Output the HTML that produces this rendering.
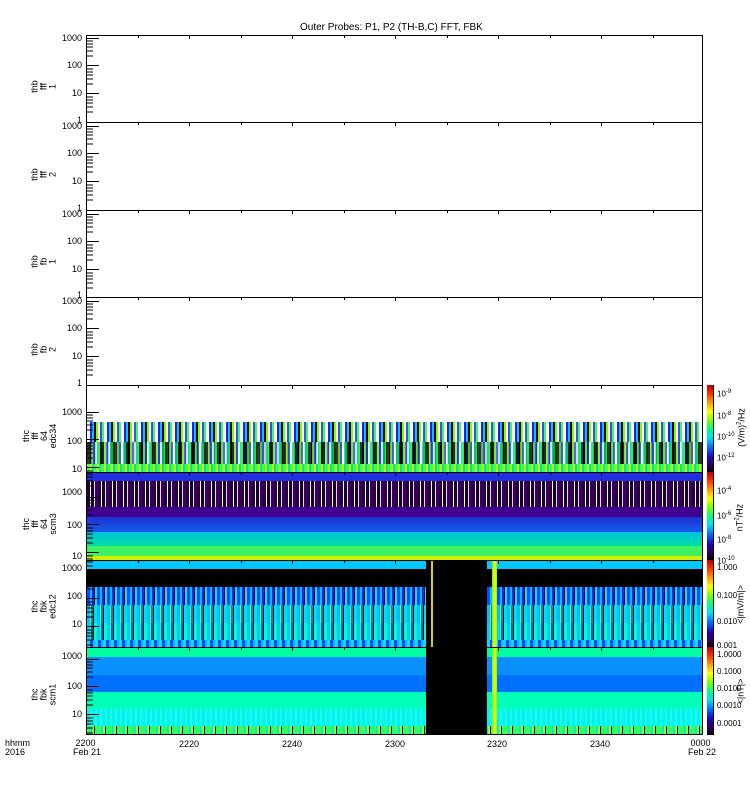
<!DOCTYPE html><html><head><style>
body{margin:0;width:750px;height:800px;background:#fff;position:relative;overflow:hidden;font-family:"Liberation Sans",sans-serif;color:#000}
.a{position:absolute}
.p{position:absolute;left:86px;width:617px;border:1px solid #000;box-sizing:border-box;overflow:hidden}
.t{position:absolute;font-size:10px;line-height:10px}
.yl{position:absolute;font-size:9px;line-height:9px;text-align:right;width:40px;left:42px}
.vl{position:absolute;font-size:9px;line-height:9px;transform:rotate(-90deg);transform-origin:center;text-align:center;width:60px}
.cb{position:absolute;left:707px;width:6px;background:linear-gradient(#c00000,#ff3000 10%,#ffb000 22%,#ffff00 30%,#80ff00 40%,#00ff80 50%,#00e0ff 60%,#0060ff 72%,#2000c0 82%,#300050 92%,#000 100%)}
.cl{position:absolute;left:717px;font-size:8px;line-height:8px}
.b{position:absolute;left:0;width:100%}
</style></head><body>
<div class="t" style="left:300px;top:23px;font-size:10px">Outer Probes: P1, P2 (TH-B,C) FFT, FBK</div>

<div class="p" style="top:35px;height:88px"></div>
<div class="p" style="top:122px;height:89px"></div>
<div class="p" style="top:210px;height:88px"></div>
<div class="p" style="top:297px;height:89px"></div>

<div class="p" style="top:385px;height:88px">
 <div class="b" style="top:36px;height:48px;background:repeating-linear-gradient(90deg,#fff 0 3px,#2020e0 3px 5px,#00c0ff 5px 7px,#000 7px 9px,#80ff00 9px 11px,#fff 11px 13px,#3050ff 13px 15px,#40ff40 15px 17px)"></div>
 <div class="b" style="top:56px;height:24px;background:repeating-linear-gradient(90deg,#000 0 4px,#80e000 4px 6px,#2040ff 6px 8px,#fff 8px 10px,#00e060 10px 13px);opacity:.8"></div>
 <div class="b" style="top:78px;height:9px;background:repeating-linear-gradient(90deg,#40ff40 0 3px,#c0ff00 3px 5px,#00e0b0 5px 7px)"></div>
</div>
<div class="p" style="top:472px;height:89px">
 <div class="b" style="top:0;height:8px;background:#2030e0"></div>
 <div class="b" style="top:8px;height:26px;background:repeating-linear-gradient(90deg,#2a0040 0 3px,#fff 3px 4px,#180028 4px 7px,#ddd 7px 8px,#3a0060 8px 11px)"></div>
 <div class="b" style="top:34px;height:10px;background:#400090"></div>
 <div class="b" style="top:44px;height:15px;background:linear-gradient(#2030d0,#1060f0)"></div>
 <div class="b" style="top:59px;height:14px;background:linear-gradient(#00c0e0,#00e0a0)"></div>
 <div class="b" style="top:73px;height:10px;background:#40f060"></div>
 <div class="b" style="top:83px;height:5px;background:#d0f000"></div>
</div>
<div class="p" style="top:560px;height:88px">
 <div class="b" style="top:0;height:8px;background:#00c8ff"></div>
 <div class="b" style="top:8px;height:18px;background:#000"></div>
 <div class="b" style="top:26px;height:18px;background:repeating-linear-gradient(90deg,#0050ff 0 3px,#00c0ff 3px 5px,#2020e0 5px 7px,#000 7px 8px,#00e0ff 8px 10px)"></div>
 <div class="b" style="top:44px;height:18px;background:repeating-linear-gradient(90deg,#00c0ff 0 3px,#80ff00 3px 4px,#0080ff 4px 6px,#000 6px 7px,#00e0e0 7px 10px)"></div>
 <div class="b" style="top:62px;height:17px;background:repeating-linear-gradient(90deg,#00d0ff 0 3px,#40ff40 3px 4px,#0060ff 4px 6px,#000 6px 7px,#00ffc0 7px 10px)"></div>
 <div class="b" style="top:79px;height:8px;background:repeating-linear-gradient(90deg,#00e0ff 0 3px,#2040ff 3px 6px,#00c0ff 6px 8px)"></div>
 <div class="a" style="left:339px;top:0;width:61px;height:88px;background:#000"></div>
 <div class="a" style="left:344px;top:0;width:2px;height:88px;background:#e0d000"></div>
 <div class="a" style="left:405px;top:0;width:5px;height:88px;background:linear-gradient(90deg,#40ff40,#ffff00,#80ff00)"></div>
</div>
<div class="p" style="top:647px;height:88px">
 <div class="b" style="top:0;height:9px;background:#00ffa0"></div>
 <div class="b" style="top:9px;height:18px;background:#0a90ff"></div>
 <div class="b" style="top:27px;height:17px;background:#0070ff"></div>
 <div class="b" style="top:44px;height:17px;background:#00ffb8"></div>
 <div class="b" style="top:61px;height:17px;background:repeating-linear-gradient(90deg,#00f0ff 0 3px,#20ffd0 3px 5px)"></div>
 <div class="b" style="top:78px;height:10px;background:repeating-linear-gradient(90deg,#40ff40 0 3px,#00e0ff 3px 5px,#a0ff00 5px 7px,#000 7px 8px,#20ff80 8px 11px)"></div>
 <div class="a" style="left:339px;top:0;width:61px;height:88px;background:#000"></div>
 <div class="a" style="left:405px;top:0;width:5px;height:88px;background:linear-gradient(90deg,#40ff40,#ffff00,#80ff00)"></div>
</div>

<svg class="a" style="left:0;top:0" width="750" height="800">
<g stroke="#000" stroke-width="1">
<!-- x ticks top/bottom per panel -->
<g id="xt">
<path d="M138.5 35v3M189.5 35v4M241.5 35v3M292.5 35v4M344.5 35v3M395.5 35v4M447.5 35v3M498.5 35v4M550.5 35v3M601.5 35v4M653.5 35v3"/>
</g>
<use href="#xt" y="87"/><use href="#xt" y="175"/><use href="#xt" y="262"/><use href="#xt" y="350"/><use href="#xt" y="437"/><use href="#xt" y="525"/><use href="#xt" y="612"/>
<g id="yt">
<path d="M87 38.5h12M87 65.5h12M87 93.5h12M87 41h6M87 44h6M87 47h6M87 51h6M87 56h6M87 69h6M87 72h6M87 75h6M87 79h6M87 84h6M87 97h6M87 100h6M87 103h6M87 107h6M87 112h6"/>
</g>
<use href="#yt" y="88"/><use href="#yt" y="176"/><use href="#yt" y="263"/>
<use href="#yt" y="374"/><use href="#yt" y="459"/><use href="#yt" y="533"/><use href="#yt" y="621"/>
</g>
</svg>

<div class="yl" style="top:34px">1000</div><div class="yl" style="top:61px">100</div><div class="yl" style="top:89px">10</div>
<div class="yl" style="top:116px">1</div><div class="yl" style="top:122px">1000</div><div class="yl" style="top:149px">100</div><div class="yl" style="top:177px">10</div>
<div class="yl" style="top:204px">1</div><div class="yl" style="top:210px">1000</div><div class="yl" style="top:237px">100</div><div class="yl" style="top:265px">10</div>
<div class="yl" style="top:291px">1</div><div class="yl" style="top:297px">1000</div><div class="yl" style="top:324px">100</div><div class="yl" style="top:352px">10</div>
<div class="yl" style="top:379px">1</div><div class="yl" style="top:408px">1000</div><div class="yl" style="top:437px">100</div><div class="yl" style="top:465px">10</div>
<div class="yl" style="top:488px">1000</div><div class="yl" style="top:521px">100</div><div class="yl" style="top:552px">10</div>
<div class="yl" style="top:564px">1000</div><div class="yl" style="top:592px">100</div><div class="yl" style="top:620px">10</div>
<div class="yl" style="top:652px">1000</div><div class="yl" style="top:682px">100</div><div class="yl" style="top:710px">10</div>

<div class="vl" style="left:14px;top:73px">thb<br>fff<br>1</div>
<div class="vl" style="left:14px;top:161px">thb<br>fff<br>2</div>
<div class="vl" style="left:14px;top:248px">thb<br>fb<br>1</div>
<div class="vl" style="left:14px;top:336px">thb<br>fb<br>2</div>
<div class="vl" style="left:10px;top:418px">thc<br>fff<br>64<br>edc34</div>
<div class="vl" style="left:10px;top:506px">thc<br>fff<br>64<br>scm3</div>
<div class="vl" style="left:14px;top:593px">thc<br>fbk<br>edc12</div>
<div class="vl" style="left:14px;top:681px">thc<br>fbk<br>scm1</div>

<div class="cb" style="top:385px;height:88px"></div>
<div class="cb" style="top:472px;height:88px"></div>
<div class="cb" style="top:560px;height:88px"></div>
<div class="cb" style="top:647px;height:88px"></div>
<div class="a" style="left:713px;top:385px;width:1px;height:350px;background:#000"></div>
<div class="cl" style="top:388px">10<sup style="font-size:6px">-9</sup></div>
<div class="cl" style="top:410px">10<sup style="font-size:6px">-8</sup></div>
<div class="cl" style="top:431px">10<sup style="font-size:6px">-10</sup></div>
<div class="cl" style="top:452px">10<sup style="font-size:6px">-12</sup></div>
<div class="vl" style="left:706px;top:422px;width:70px">(V/m)<sup style="font-size:6px">2</sup>/Hz</div>
<div class="cl" style="top:485px">10<sup style="font-size:6px">-4</sup></div>
<div class="cl" style="top:510px">10<sup style="font-size:6px">-6</sup></div>
<div class="cl" style="top:534px">10<sup style="font-size:6px">-8</sup></div>
<div class="cl" style="top:555px">10<sup style="font-size:6px">-10</sup></div>
<div class="vl" style="left:709px;top:512px;width:60px">nT<sup style="font-size:6px">2</sup>/Hz</div>
<div class="cl" style="top:564px">1.000</div>
<div class="cl" style="top:592px">0.100</div>
<div class="cl" style="top:618px">0.010</div>
<div class="cl" style="top:642px">0.001</div>
<div class="vl" style="left:706px;top:600px;width:70px">&lt;|mV/m|&gt;</div>
<div class="cl" style="top:651px">1.0000</div>
<div class="cl" style="top:668px">0.1000</div>
<div class="cl" style="top:685px">0.0100</div>
<div class="cl" style="top:702px">0.0010</div>
<div class="cl" style="top:720px">0.0001</div>
<div class="vl" style="left:711px;top:687px;width:60px">&lt;|nT|&gt;</div>

<div class="t" style="left:5px;top:739px;font-size:9px;line-height:9px">hhmm<br>2016</div>
<div class="t" style="left:73px;top:739px;font-size:9px;line-height:9px">&nbsp;2200<br>Feb 21</div>
<div class="t" style="left:179px;top:739px;font-size:9px">2220</div>
<div class="t" style="left:282px;top:739px;font-size:9px">2240</div>
<div class="t" style="left:385px;top:739px;font-size:9px">2300</div>
<div class="t" style="left:487px;top:739px;font-size:9px">2320</div>
<div class="t" style="left:590px;top:739px;font-size:9px">2340</div>
<div class="t" style="left:688px;top:739px;font-size:9px;line-height:9px">&nbsp;0000<br>Feb 22</div>
</body></html>
